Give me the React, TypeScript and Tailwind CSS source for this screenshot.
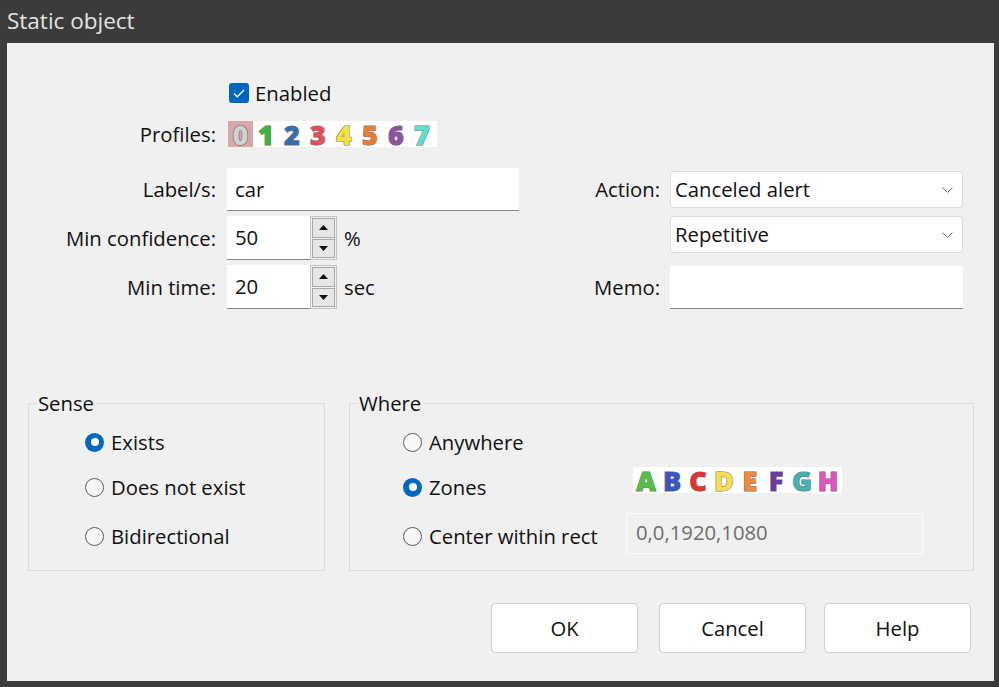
import React from "react";

const FONT = "font-['Segoe_UI','Open_Sans','Noto_Sans',sans-serif]";

const DIGITS = [
  { c: "1", color: "#3fb43a" },
  { c: "2", color: "#3a6db0" },
  { c: "3", color: "#e0505c" },
  { c: "4", color: "#f2e23a" },
  { c: "5", color: "#ef7a32" },
  { c: "6", color: "#8e52a3" },
  { c: "7", color: "#5be0d2" },
];

const ZONES = [
  { c: "A", color: "#52c043" },
  { c: "B", color: "#3b55c2" },
  { c: "C", color: "#e23232" },
  { c: "D", color: "#f7dc52" },
  { c: "E", color: "#f08a3e" },
  { c: "F", color: "#6b3c9e" },
  { c: "G", color: "#45b2b2" },
  { c: "H", color: "#e052c2" },
];

function Glyph({ c, color }: { c: string; color: string }) {
  return (
    <span
      className="w-[26px] text-center text-[27px] font-extrabold leading-none [-webkit-text-stroke:1px_rgba(40,40,40,0.7)] [paint-order:stroke_fill]"
      style={{ color }}
    >
      {c}
    </span>
  );
}

function Chevron() {
  return (
    <svg width="11" height="6" viewBox="0 0 11 6" className="mr-[9px]">
      <path d="M0.5 0.5 L5.5 5.5 L10.5 0.5" fill="none" stroke="#6a6a6a" strokeWidth="1" />
    </svg>
  );
}

function Select({ value, className = "" }: { value: string; className?: string }) {
  return (
    <div
      className={`flex h-[37px] w-[293px] items-center justify-between rounded-[3px] border border-[#dcdcdc] bg-white pl-[4px] ${className}`}
    >
      <span>{value}</span>
      <Chevron />
    </div>
  );
}

function TextBox({ value, className = "" }: { value: string; className?: string }) {
  return (
    <div
      className={`flex items-center border-b border-[#868686] bg-white pl-[8px] ${className}`}
    >
      {value}
    </div>
  );
}

function Spinner({ value }: { value: string }) {
  return (
    <div className="flex h-[44px]">
      <TextBox value={value} className="h-[44px] w-[83px]" />
      <div className="flex w-[27px] flex-col gap-[1px] border border-[#c4c4c4] bg-[#f0f0f0] p-[1px]">
        <div className="flex flex-1 items-center justify-center border border-[#a8a8a8] bg-[#e6e6e6]">
          <svg width="9" height="5" viewBox="0 0 9 5">
            <path d="M0 5 L4.5 0 L9 5 Z" fill="#111" />
          </svg>
        </div>
        <div className="flex flex-1 items-center justify-center border border-[#a8a8a8] bg-[#e6e6e6]">
          <svg width="9" height="5" viewBox="0 0 9 5">
            <path d="M0 0 L4.5 5 L9 0 Z" fill="#111" />
          </svg>
        </div>
      </div>
    </div>
  );
}

function Radio({ label, checked = false }: { label: string; checked?: boolean }) {
  return (
    <div className="flex h-[24px] items-center">
      {checked ? (
        <span className="flex h-[19px] w-[19px] items-center justify-center rounded-full bg-[#0067c0]">
          <span className="h-[8px] w-[8px] rounded-full bg-white" />
        </span>
      ) : (
        <span className="h-[19px] w-[19px] rounded-full border border-[#5c5c5c] bg-[#f7f7f7]" />
      )}
      <span className="ml-[7px]">{label}</span>
    </div>
  );
}

function Button({ label, className = "" }: { label: string; className?: string }) {
  return (
    <div
      className={`flex h-[50px] w-[147px] items-center justify-center rounded-[4px] border border-[#d0d0d0] bg-white ${className}`}
    >
      {label}
    </div>
  );
}

export default function App() {
  return (
    <div className={`flex h-[687px] w-[999px] flex-col bg-[#3b3b3b] text-[20.3px] text-[#111] ${FONT}`}>
      <div className="flex h-[43px] items-center pl-[7px] pb-[2px] text-[22.5px] text-[#e4e4e4]">
        Static object
      </div>

      <div className="ml-[7px] mr-[5px] flex h-[638px] flex-col bg-[#f0f0f0] pt-[40px]">
        {/* Enabled */}
        <div className="ml-[222px] flex h-[20px] items-center">
          <span className="flex h-[20px] w-[20px] items-center justify-center rounded-[3px] bg-[#0067c0]">
            <svg width="12" height="9" viewBox="0 0 12 9">
              <path d="M1 4.5 L4.3 7.8 L11 1" fill="none" stroke="white" strokeWidth="1.3" />
            </svg>
          </span>
          <span className="ml-[6px]">Enabled</span>
        </div>

        {/* Profiles */}
        <div className="mt-[18px] flex h-[26px] items-center">
          <span className="w-[209px] text-right">Profiles:</span>
          <div className="ml-[12px] flex h-[26px] items-center bg-white">
            <span className="flex h-[26px] w-[25px] items-center justify-center bg-[#d5a9aa]">
              <Glyph c="0" color="#d2d2d2" />
            </span>
            {DIGITS.map((d) => (
              <Glyph key={d.c} c={d.c} color={d.color} />
            ))}
            <span className="w-[2px]" />
          </div>
        </div>

        {/* Label / Action */}
        <div className="mt-[21px] flex h-[43px]">
          <div className="flex w-[523px] items-center">
            <span className="w-[209px] text-right">Label/s:</span>
            <TextBox value="car" className="ml-[11px] h-[43px] w-[292px]" />
          </div>
          <div className="flex items-center">
            <span className="w-[130px] text-right">Action:</span>
            <Select value="Canceled alert" className="ml-[10px]" />
          </div>
        </div>

        {/* Min confidence / Repetitive */}
        <div className="mt-[5px] flex h-[44px]">
          <div className="flex w-[523px] items-center">
            <span className="w-[209px] text-right">Min confidence:</span>
            <div className="ml-[11px]">
              <Spinner value="50" />
            </div>
            <span className="ml-[7px]">%</span>
          </div>
          <div className="flex items-start">
            <Select value="Repetitive" className="ml-[140px]" />
          </div>
        </div>

        {/* Min time / Memo */}
        <div className="mt-[5px] flex h-[44px]">
          <div className="flex w-[523px] items-center">
            <span className="w-[209px] text-right">Min time:</span>
            <div className="ml-[11px]">
              <Spinner value="20" />
            </div>
            <span className="ml-[7px]">sec</span>
          </div>
          <div className="flex items-center">
            <span className="w-[130px] text-right">Memo:</span>
            <TextBox value="" className="ml-[10px] h-[43px] w-[293px]" />
          </div>
        </div>

        {/* Group boxes */}
        <div className="ml-[21px] mt-[94px] flex gap-[24px]">
          <div className="relative h-[168px] w-[297px] border border-[#dcdcdc] pl-[56px] pt-[26px]">
            <span className="absolute left-[8px] top-[-13px] bg-[#f0f0f0] pl-[1px] pr-[2px] leading-[24px]">
              Sense
            </span>
            <Radio label="Exists" checked />
            <div className="mt-[21px]">
              <Radio label="Does not exist" />
            </div>
            <div className="mt-[25px]">
              <Radio label="Bidirectional" />
            </div>
          </div>

          <div className="relative h-[168px] w-[625px] border border-[#dcdcdc] pl-[53px] pt-[26px]">
            <span className="absolute left-[8px] top-[-13px] bg-[#f0f0f0] pl-[1px] pr-[2px] leading-[24px]">
              Where
            </span>
            <Radio label="Anywhere" />
            <div className="mt-[13px] flex items-start">
              <div className="mt-[8px] w-[230px]">
                <Radio label="Zones" checked />
              </div>
              <div className="flex h-[26px] items-center bg-white">
                {ZONES.map((z) => (
                  <Glyph key={z.c} c={z.c} color={z.color} />
                ))}
                <span className="w-[1px]" />
              </div>
            </div>
            <div className="mt-[14px] flex items-start">
              <div className="mt-[11px] w-[223px]">
                <Radio label="Center within rect" />
              </div>
              <div className="flex h-[41px] w-[297px] items-center border border-[#fbfbfb] pb-[3px] pl-[9px] text-[#6d6d6d]">
                0,0,1920,1080
              </div>
            </div>
          </div>
        </div>

        {/* Buttons */}
        <div className="mt-[32px] flex justify-end pr-[23px]">
          <Button label="OK" />
          <Button label="Cancel" className="ml-[21px]" />
          <Button label="Help" className="ml-[18px]" />
        </div>
      </div>
    </div>
  );
}
